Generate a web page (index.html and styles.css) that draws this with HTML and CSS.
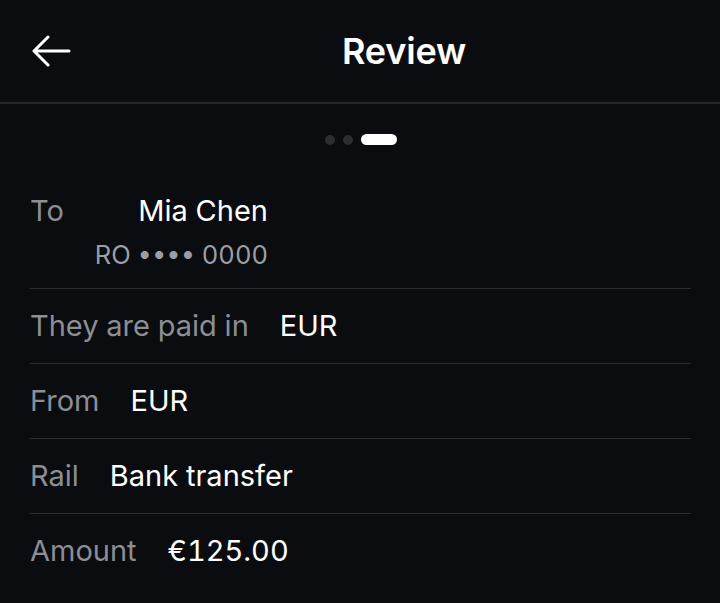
FILE: index.html
```html
<!DOCTYPE html>
<html>
<head>
<meta charset="utf-8">
<link rel="stylesheet" href="styles.css">
</head>
<body>
<div class="screen">
  <header class="header">
    <button class="back" aria-label="Back">
      <svg width="40" height="32" viewBox="0 0 40 32" fill="none" stroke="#fff" stroke-width="3" stroke-linecap="round" stroke-linejoin="round">
        <path d="M38 16H4M17 2L3 16l14 14"/>
      </svg>
    </button>
    <h1 class="title">Review</h1>
  </header>
  <div class="steps">
    <span class="dot"></span><span class="dot"></span><span class="dot active"></span>
  </div>
  <div class="list">
    <div class="row first">
      <span class="label">To</span>
      <div class="value stack">
        <span>Mia Chen</span>
        <span class="sub">RO •••• 0000</span>
      </div>
    </div>
    <div class="row">
      <span class="label">They are paid in</span>
      <span class="value">EUR</span>
    </div>
    <div class="row">
      <span class="label">From</span>
      <span class="value">EUR</span>
    </div>
    <div class="row">
      <span class="label">Rail</span>
      <span class="value">Bank transfer</span>
    </div>
    <div class="row last">
      <span class="label">Amount</span>
      <span class="value">€125.00</span>
    </div>
  </div>
</div>
</body>
</html>
```
FILE: styles.css
```css
html, body {
  margin: 0;
  padding: 0;
  background: #0b0c0f;
}
body {
  font-family: Inter, "Noto Sans", sans-serif;
  color: #fff;
  width: 720px;
  height: 603px;
  overflow: hidden;
}
.header {
  height: 102px;
  border-bottom: 2px solid #26272a;
  display: flex;
  align-items: center;
  justify-content: center;
  position: relative;
}
.back {
  position: absolute;
  left: 31px;
  top: 35px;
  background: none;
  border: 0;
  padding: 0;
  display: flex;
}
.title {
  margin: 0;
  font-size: 36px;
  font-weight: 600;
  letter-spacing: -0.2px;
  transform: translateX(44px);
}
.steps {
  display: flex;
  justify-content: center;
  gap: 8px;
  margin-top: 30px;
  height: 11px;
  padding-left: 2px;
}
.dot {
  width: 10px;
  height: 10px;
  border-radius: 50%;
  background: #2c2d31;
  align-self: center;
}
.dot.active {
  width: 36px;
  height: 11px;
  border-radius: 6px;
  background: #fff;
}
.list {
  margin: 29px 29px 0 30px;
}
.row {
  display: flex;
  align-items: flex-start;
  gap: 31px;
  padding: 19px 0 19px;
  border-bottom: 1px solid #2a2b2e;
  font-size: 29px;
  line-height: 36px;
  font-variant-numeric: tabular-nums;
}
.row.first {
  padding-bottom: 15px;
}
.row.last {
  border-bottom: 0;
}
.label {
  color: #8b8e94;
}
.value {
  color: #fff;
}
.stack {
  display: flex;
  flex-direction: column;
  align-items: flex-end;
  gap: 8px;
}
.sub {
  color: #9b9ea4;
  font-size: 25.5px;
}
```
